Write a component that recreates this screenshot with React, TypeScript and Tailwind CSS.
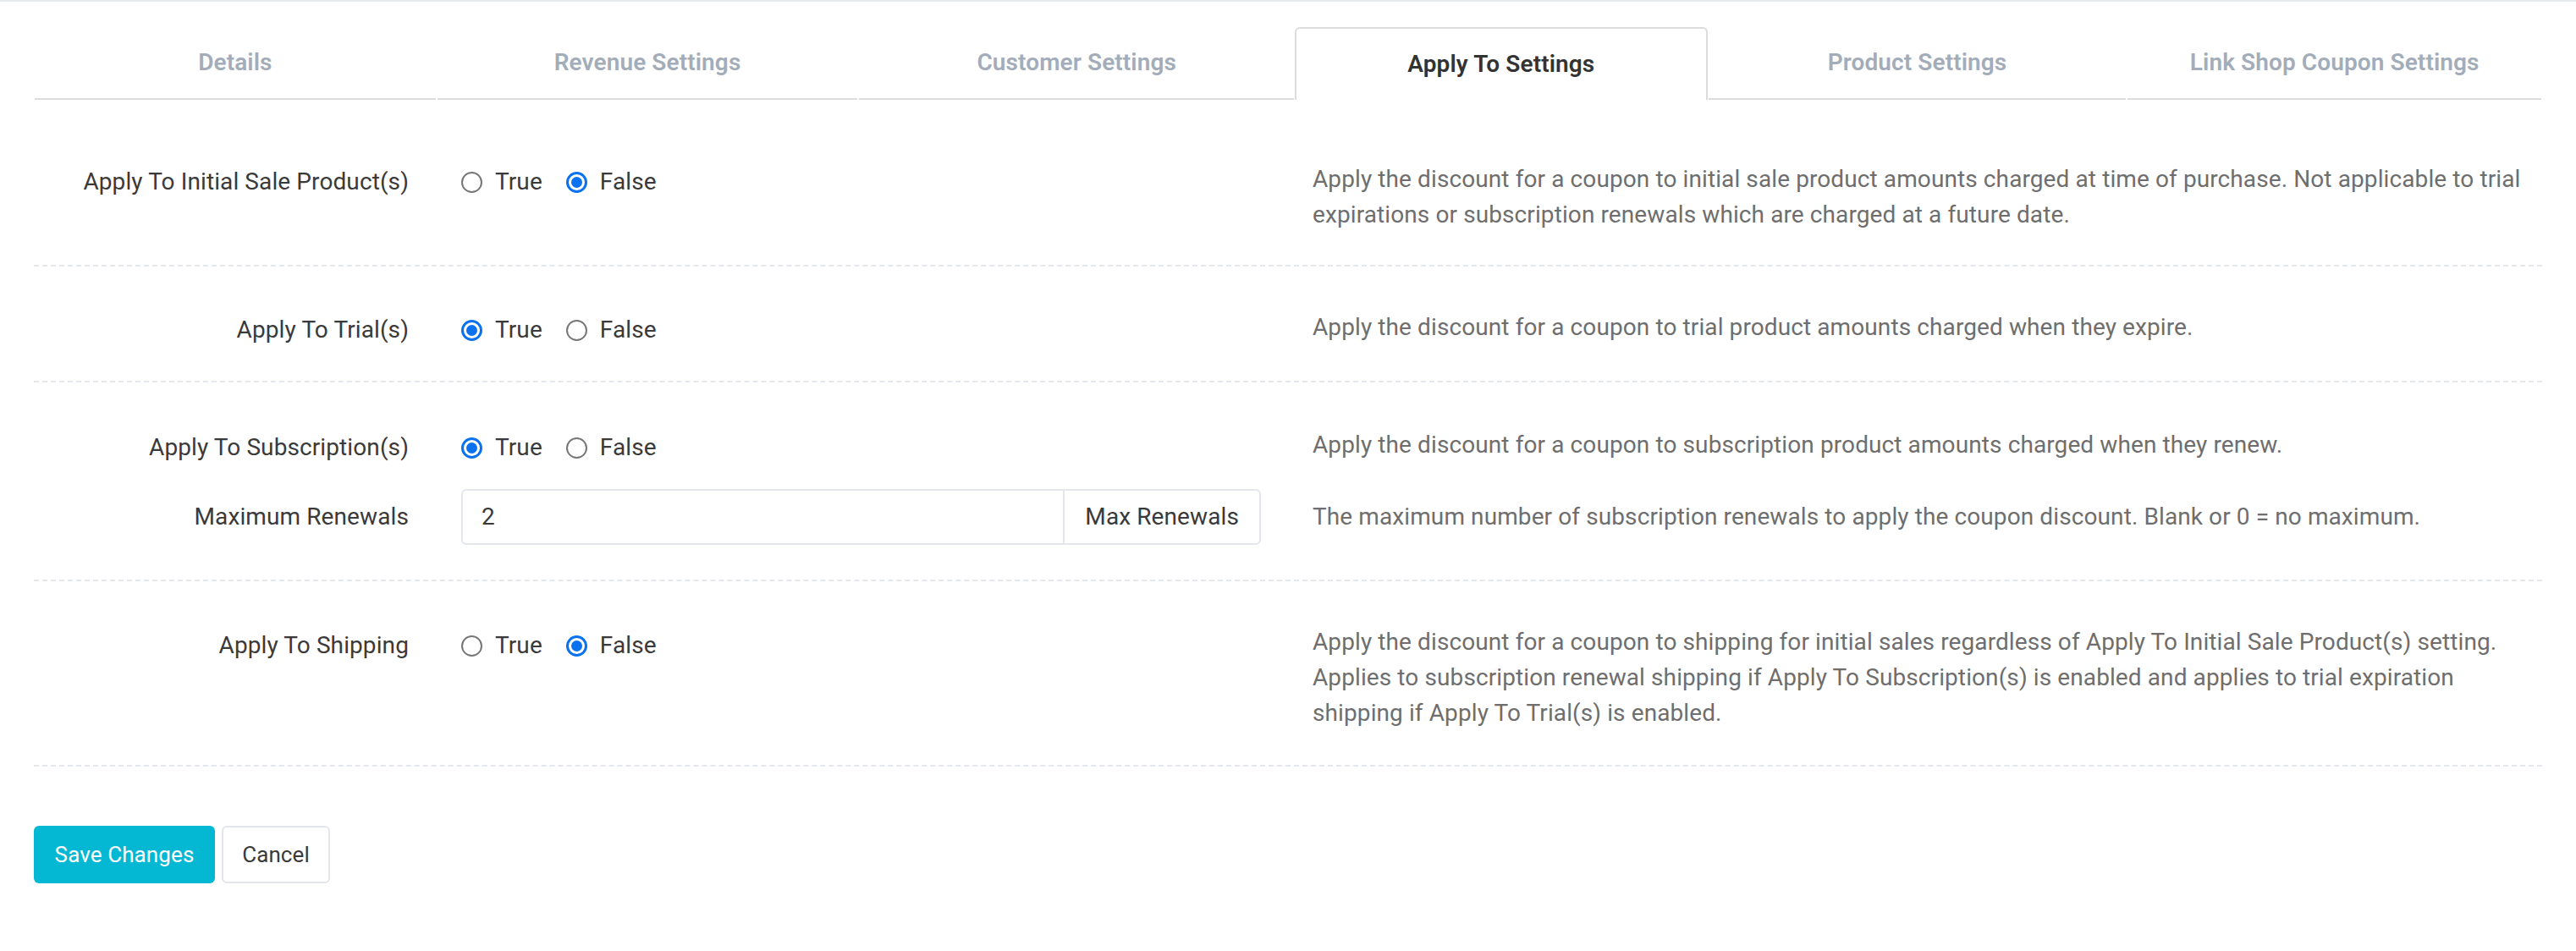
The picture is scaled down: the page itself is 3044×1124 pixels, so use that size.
import React, { useState } from 'react';

const tabs = [
  { label: 'Details', w: 'w-[475px]' },
  { label: 'Revenue Settings', w: 'w-[498px]' },
  { label: 'Customer Settings', w: 'w-[515px]' },
  { label: 'Apply To Settings', w: 'w-[489px]', active: true },
  { label: 'Product Settings', w: 'w-[495px]' },
  { label: 'Link Shop Coupon Settings', w: 'w-[490px]' },
];

function Radio({ checked, label, onClick }: { checked: boolean; label: string; onClick: () => void }) {
  return (
    <button type="button" onClick={onClick} className="flex items-center gap-[15px]">
      {checked ? (
        <span className="w-[25px] h-[25px] rounded-full border-[3px] border-[#0a72ef] flex items-center justify-center bg-white">
          <span className="w-[13px] h-[13px] rounded-full bg-[#0a72ef]" />
        </span>
      ) : (
        <span className="w-[25px] h-[25px] rounded-full border-2 border-[#777777] bg-white" />
      )}
      <span>{label}</span>
    </button>
  );
}

function BoolField({ value, onChange }: { value: boolean; onChange: (v: boolean) => void }) {
  return (
    <div className="flex items-center gap-[28px] h-[42px]">
      <Radio checked={value} label="True" onClick={() => onChange(true)} />
      <Radio checked={!value} label="False" onClick={() => onChange(false)} />
    </div>
  );
}

export default function App() {
  const [initialSale, setInitialSale] = useState(false);
  const [trial, setTrial] = useState(true);
  const [subscription, setSubscription] = useState(true);
  const [renewals, setRenewals] = useState('2');
  const [shipping, setShipping] = useState(false);

  return (
    <div className="min-h-screen bg-white font-[Roboto,sans-serif] text-[28px] tracking-[0.1px] leading-[42px] text-[#3a3a3a]">
      <div className="h-[2px] bg-[#e6eaed]" />
      <div className="px-[40px] pt-[30px]">
        {/* Tabs */}
        <div className="flex">
          {tabs.map((t) =>
            t.active ? (
              <div
                key={t.label}
                className={`${t.w} h-[86px] flex items-center justify-center border-2 border-b-0 border-[#dcdcdc] rounded-t-[6px] bg-white font-semibold text-[#333333]`}
              >
                {t.label}
              </div>
            ) : (
              <div
                key={t.label}
                className={`${t.w} h-[86px] flex items-center justify-center border-b-2 border-[#dcdcdc] font-semibold text-[#a3adba] mx-[1px]`}
              >
                {t.label}
              </div>
            )
          )}
        </div>

        {/* Form */}
        <div className="pt-[17px]">
          <div className="flex pt-[56px] pb-[38px] border-b-2 border-dashed border-[#e4e8ec]">
            <div className="w-[443px] text-right pt-[3px]">Apply To Initial Sale Product(s)</div>
            <div className="w-[945px] ml-[62px] pt-[3px]">
              <BoolField value={initialSale} onChange={setInitialSale} />
            </div>
            <p className="flex-1 ml-[61px] pr-[14px] text-[#6e6e6e]">
              Apply the discount for a coupon to initial sale product amounts charged at time of purchase. Not applicable to trial expirations or subscription renewals which are charged at a future date.
            </p>
          </div>

          <div className="flex pt-[51px] pb-[39px] border-b-2 border-dashed border-[#e4e8ec]">
            <div className="w-[443px] text-right pt-[3px]">Apply To Trial(s)</div>
            <div className="w-[945px] ml-[62px] pt-[3px]">
              <BoolField value={trial} onChange={setTrial} />
            </div>
            <p className="flex-1 ml-[61px] pr-[14px] text-[#6e6e6e]">
              Apply the discount for a coupon to trial product amounts charged when they expire.
            </p>
          </div>

          <div className="pt-[53px] pb-[41px] border-b-2 border-dashed border-[#e4e8ec]">
            <div className="flex">
              <div className="w-[443px] text-right pt-[3px]">Apply To Subscription(s)</div>
              <div className="w-[945px] ml-[62px] pt-[3px]">
                <BoolField value={subscription} onChange={setSubscription} />
              </div>
              <p className="flex-1 ml-[61px] pr-[14px] text-[#6e6e6e]">
                Apply the discount for a coupon to subscription product amounts charged when they renew.
              </p>
            </div>
            <div className="flex items-center mt-[28px]">
              <div className="w-[443px] text-right">Maximum Renewals</div>
              <div className="w-[945px] ml-[62px] flex h-[66px] border-2 border-[#e3e6ea] rounded-[6px]">
                <input
                  value={renewals}
                  onChange={(e) => setRenewals(e.target.value)}
                  className="flex-1 min-w-0 px-[22px] outline-none bg-transparent text-[#3a3a3a]"
                />
                <span className="flex items-center px-[24px] border-l-2 border-[#e3e6ea] text-[#3a3a3a]">
                  Max Renewals
                </span>
              </div>
              <p className="flex-1 ml-[61px] pr-[14px] text-[#6e6e6e]">
                The maximum number of subscription renewals to apply the coupon discount. Blank or 0 = no maximum.
              </p>
            </div>
          </div>

          <div className="flex pt-[51px] pb-[40px] border-b-2 border-dashed border-[#e4e8ec]">
            <div className="w-[443px] text-right pt-[4px]">Apply To Shipping</div>
            <div className="w-[945px] ml-[62px] pt-[4px]">
              <BoolField value={shipping} onChange={setShipping} />
            </div>
            <p className="flex-1 ml-[61px] pr-[14px] text-[#6e6e6e]">
              Apply the discount for a coupon to shipping for initial sales regardless of Apply To Initial Sale Product(s) setting. Applies to subscription renewal shipping if Apply To Subscription(s) is enabled and applies to trial expiration shipping if Apply To Trial(s) is enabled.
            </p>
          </div>
        </div>

        {/* Actions */}
        <div className="flex gap-[8px] mt-[70px] text-[26px]">
          <button
            type="button"
            className="w-[214px] h-[68px] rounded-[6px] bg-[#04b8d4] text-white"
          >
            Save Changes
          </button>
          <button
            type="button"
            className="w-[128px] h-[68px] rounded-[6px] border-2 border-[#e3e6ea] bg-white text-[#3a3a3a]"
          >
            Cancel
          </button>
        </div>
      </div>
    </div>
  );
}
